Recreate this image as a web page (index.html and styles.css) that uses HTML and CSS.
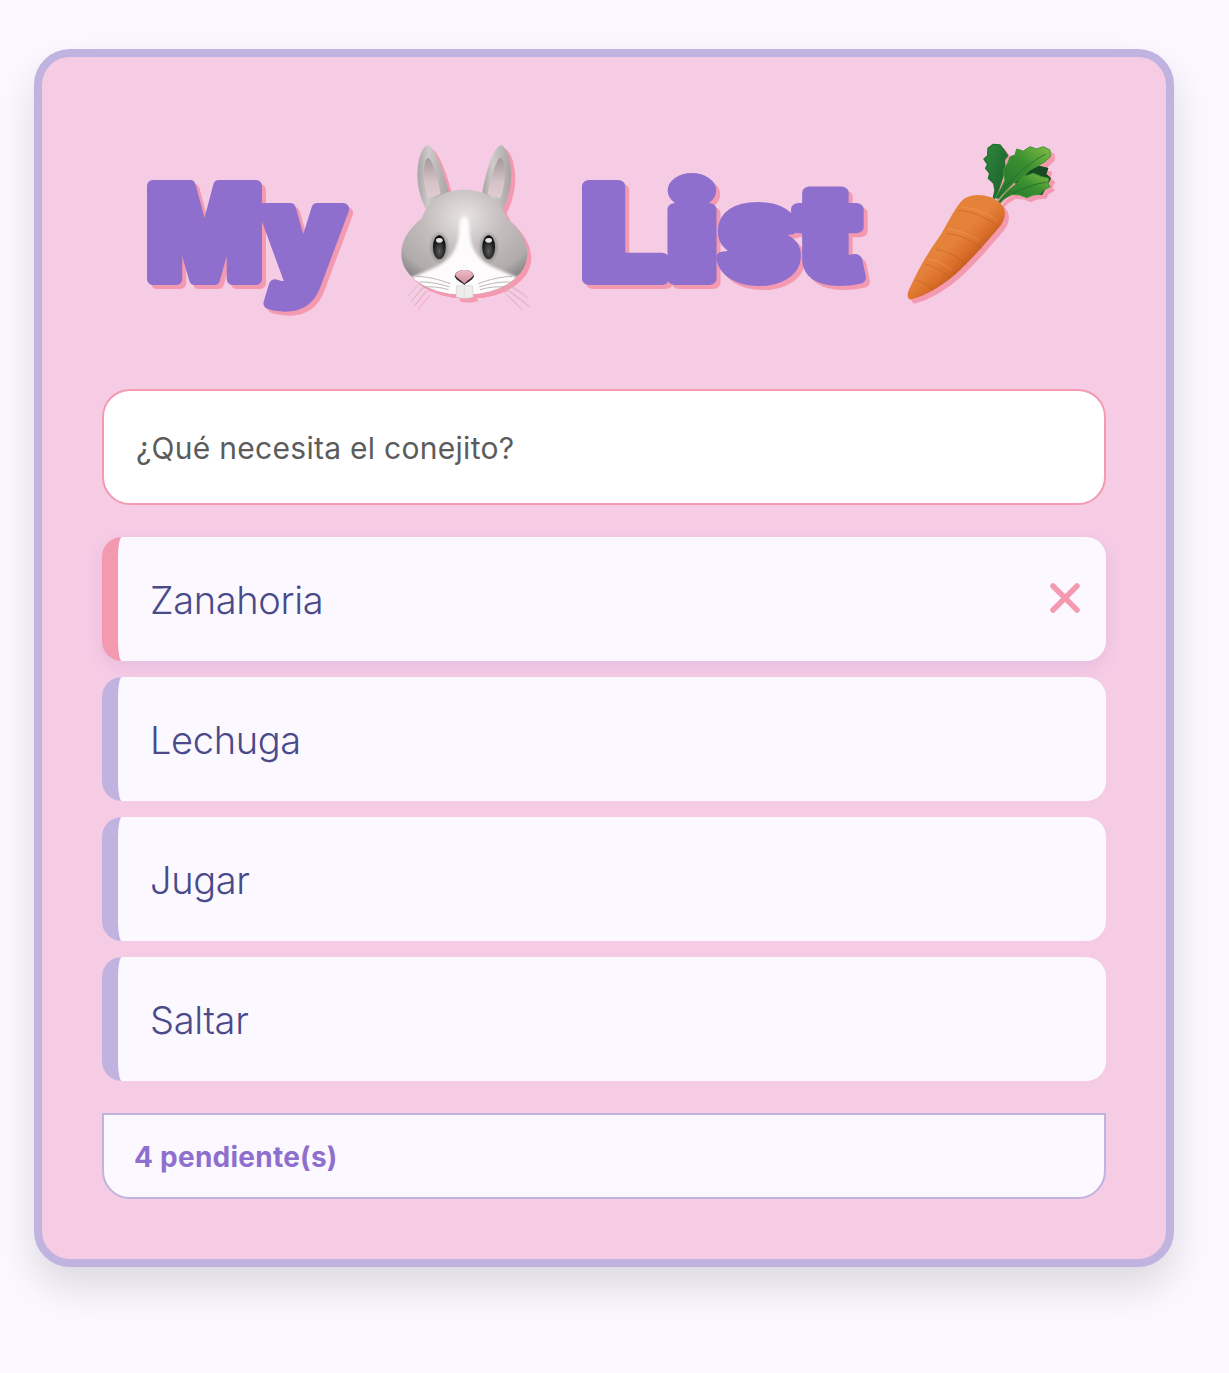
FILE: index.html
```html
<!DOCTYPE html>
<html lang="es">
<head>
<meta charset="utf-8">
<title>My List</title>
<link rel="stylesheet" href="styles.css">
</head>
<body>
<main class="card">
  <h1 class="title">
    <svg class="word word-my" viewBox="0 0 203 180" width="203" height="180"><text x="0" y="144" textLength="115" lengthAdjust="spacingAndGlyphs">M</text><text x="116" y="144" textLength="81" lengthAdjust="spacingAndGlyphs">y</text></svg>
    <svg class="bunny" viewBox="0 0 480 540" width="160" height="180" aria-label="conejo">
      <defs>
        <radialGradient id="headG" cx="50%" cy="26%" r="68%">
          <stop offset="0" stop-color="#e8e4e3"/><stop offset=".45" stop-color="#c4bfbe"/><stop offset=".85" stop-color="#b1acab"/><stop offset="1" stop-color="#8f8b8b"/>
        </radialGradient>
        <linearGradient id="earG" x1="0" y1="0" x2="1" y2="0">
          <stop offset="0" stop-color="#a8a4a4"/><stop offset=".35" stop-color="#cfcbca"/><stop offset="1" stop-color="#a6a2a2"/>
        </linearGradient>
        <linearGradient id="innerEar" x1="0" y1="0" x2="0" y2="1">
          <stop offset="0" stop-color="#a4999a"/><stop offset=".6" stop-color="#d6c3c7"/><stop offset="1" stop-color="#e0cdd0"/>
        </linearGradient>
        <radialGradient id="eyeShade" cx="50%" cy="50%" r="50%">
          <stop offset=".5" stop-color="#6e6a6a" stop-opacity=".75"/><stop offset="1" stop-color="#8a8686" stop-opacity="0"/>
        </radialGradient>
        <linearGradient id="noseG" x1="0" y1="0" x2="0" y2="1">
          <stop offset="0" stop-color="#efbcc8"/><stop offset="1" stop-color="#cf8fa2"/>
        </linearGradient>
        <radialGradient id="eyeG" cx="50%" cy="65%" r="55%">
          <stop offset="0" stop-color="#5e5e5e"/><stop offset="1" stop-color="#0d0d0d"/>
        </radialGradient>
        <filter id="soft" x="-10%" y="-10%" width="120%" height="120%"><feGaussianBlur stdDeviation="4"/></filter>
        <clipPath id="headClip"><path d="M238 164C180 164 132 190 110 250C70 282 48 320 49 358C50 405 86 444 150 466C180 476 205 479 238 479C271 479 296 476 326 466C390 444 426 405 427 358C426 320 406 282 366 250C344 190 296 164 238 164Z"/></clipPath>
      </defs>
      <path d="M125 226C104 190 94 140 98 100C101 62 116 32 128 30C146 36 168 84 192 172Z" fill="url(#earG)"/>
      <path d="M130 190C116 150 112 110 121 80C126 66 132 66 138 78C152 105 162 140 166 178Z" fill="url(#innerEar)"/>
      <path d="M351 226C372 190 382 140 378 100C375 62 360 32 348 30C330 36 308 84 292 172Z" fill="url(#earG)"/>
      <path d="M346 190C360 150 364 110 355 80C350 66 344 66 338 78C324 105 314 140 308 178Z" fill="url(#innerEar)"/>
      <path d="M238 164C180 164 132 190 110 250C70 282 48 320 49 358C50 405 86 444 150 466C180 476 205 479 238 479C271 479 296 476 326 466C390 444 426 405 427 358C426 320 406 282 366 250C344 190 296 164 238 164Z" fill="url(#headG)"/>
      <g clip-path="url(#headClip)">
        <path d="M238 245C226 245 223 262 222 290C220 330 205 368 160 392C125 408 100 418 70 432C100 460 130 480 238 500C346 480 376 460 406 432C376 418 351 408 316 392C271 368 256 330 254 290C253 262 250 245 238 245Z" fill="#fdfbfb" filter="url(#soft)"/>
      </g>
      <ellipse cx="163" cy="337" rx="32" ry="50" fill="url(#eyeShade)"/>
      <ellipse cx="311" cy="337" rx="32" ry="50" fill="url(#eyeShade)"/>
      <ellipse cx="163" cy="337" rx="19" ry="36" fill="url(#eyeG)"/>
      <ellipse cx="311" cy="337" rx="19" ry="36" fill="url(#eyeG)"/>
      <ellipse cx="163" cy="316" rx="10" ry="7" fill="#e4e4e4"/>
      <ellipse cx="311" cy="316" rx="10" ry="7" fill="#e4e4e4"/>
      <path d="M215 452H262L265 486C250 491 228 491 213 486Z" fill="#efedec" stroke="#c9c6c5" stroke-width="1.5"/>
      <path d="M238 456V488" stroke="#cfcccb" stroke-width="1.5"/>
      <path d="M238 450C230 442 214 438 209 424C210 412 222 405 238 405C254 405 266 412 267 424C262 438 246 442 238 450Z" fill="#2a2325"/>
      <path d="M238 446C228 436 216 430 210 420C214 410 226 405 238 405C250 405 262 410 266 420C260 430 248 436 238 446Z" fill="url(#noseG)"/>
      <g fill="none" stroke="#aaa6a6" stroke-width="2.4" stroke-linecap="round">
        <path d="M195 446C160 432 125 425 96 424"/>
        <path d="M192 455C160 445 130 440 104 441"/>
        <path d="M190 464C165 456 140 454 118 456"/>
        <path d="M281 446C316 432 351 425 380 424"/>
        <path d="M284 455C316 445 346 440 372 441"/>
        <path d="M286 464C311 456 336 454 358 456"/>
      </g>
      <g fill="none" stroke="#c6c2c2" stroke-width="2.2" stroke-linecap="round">
        <path d="M104 446L68 484"/><path d="M112 458L78 500"/><path d="M122 468L88 512"/>
        <path d="M370 446L416 476"/><path d="M362 458L422 504"/><path d="M354 468L398 510"/>
      </g>
    </svg>
    <svg class="word word-list" viewBox="0 0 282 180" width="282" height="180"><text x="-1" y="144" textLength="84" lengthAdjust="spacingAndGlyphs">L</text><text x="84" y="144" textLength="50" lengthAdjust="spacingAndGlyphs">i</text><text x="136" y="144" textLength="79" lengthAdjust="spacingAndGlyphs">s</text><text x="214" y="144" textLength="64" lengthAdjust="spacingAndGlyphs">t</text></svg>
    <svg class="carrot" viewBox="0 0 510 525" width="170" height="175" aria-label="zanahoria">
      <defs>
        <linearGradient id="carrotG" x1="0.62" y1="0.72" x2="0.42" y2="0.5">
          <stop offset="0" stop-color="#bb561a"/><stop offset=".5" stop-color="#da6f29"/><stop offset="1" stop-color="#e5823a"/>
        </linearGradient>
        <linearGradient id="leafA" x1="0" y1="1" x2="1" y2="0">
          <stop offset="0" stop-color="#1f6d2a"/><stop offset=".6" stop-color="#3a8f30"/><stop offset="1" stop-color="#82bd45"/>
        </linearGradient>
        <linearGradient id="leafB" x1="0" y1="0" x2="1" y2="1">
          <stop offset="0" stop-color="#2f8a3c"/><stop offset="1" stop-color="#1a5a2a"/>
        </linearGradient>
      </defs>
      <path d="M360 140L400 108L432 94L458 100L452 118L466 130L440 178L380 170Z" fill="#174a22" stroke="#174a22" stroke-width="4" stroke-linejoin="round"/>
      <path d="M295 188L300 165L296 145L280 130L284 115L272 100L278 88L267 72L278 62L279 40L295 28L315 30L330 50L338 62L328 75L330 100L322 130L310 165L300 190Z" fill="url(#leafB)" stroke="#246f32" stroke-width="4" stroke-linejoin="round"/>
      <path d="M302 188L318 160L330 135L324 105L338 85L345 65L360 60L365 42L385 48L405 35L425 42L445 35L465 45L466 65L450 80L430 92L405 105L385 125L355 145L330 170L310 192Z" fill="url(#leafA)" stroke="#3f9431" stroke-width="3" stroke-linejoin="round"/>
      <path d="M310 200L335 170L360 150L385 125L415 115L440 125L462 130L458 145L466 155L445 165L435 178L415 180L395 188L375 180L350 178L325 192L315 205Z" fill="url(#leafA)" stroke="#3f9431" stroke-width="3" stroke-linejoin="round"/>
      <path d="M308 186C340 140 390 90 450 58M316 198C360 170 400 150 452 142" fill="none" stroke="#1f6d2a" stroke-width="2.5" stroke-linecap="round"/>
      <path d="M46 494C36 490 36 478 42 464C62 420 92 362 130 310C158 268 180 214 206 192C236 172 288 178 316 204C334 222 334 246 318 270C290 304 250 352 196 404C154 444 96 482 46 494Z" fill="url(#carrotG)"/>
      <g fill="none" stroke="#b9551b" stroke-width="3" stroke-linecap="round" opacity=".45">
        <path d="M190 226C232 228 280 250 312 276"/>
        <path d="M156 296C196 298 236 320 262 342"/>
        <path d="M124 344C156 346 190 368 214 388"/>
        <path d="M92 388C118 392 146 412 164 428"/>
        <path d="M64 436C82 440 102 452 114 464"/>
      </g>
      <g fill="none" stroke="#f2a566" stroke-width="3" stroke-linecap="round" opacity=".45">
        <path d="M200 216C236 218 276 234 304 254"/>
        <path d="M160 282C196 286 226 300 250 316"/>
        <path d="M100 372C126 376 150 390 170 406"/>
      </g>
    </svg>
  </h1>

  <input class="new-item" type="text" placeholder="¿Qué necesita el conejito?">

  <ul class="list">
    <li class="item item-active">
      <span>Zanahoria</span>
      <svg class="remove" viewBox="0 0 30 30" width="30" height="30" aria-label="eliminar"><path d="M3 3L27 27M27 3L3 27"/></svg>
    </li>
    <li class="item"><span>Lechuga</span></li>
    <li class="item"><span>Jugar</span></li>
    <li class="item"><span>Saltar</span></li>
  </ul>

  <footer class="summary">4 pendiente(s)</footer>
</main>
</body>
</html>
```
FILE: styles.css
```css
* { box-sizing: border-box; }

html, body { margin: 0; }

body {
  min-height: 1373px;
  padding: 49px 55px 0 34px;
  background: #fbf9ff;
  font-family: "Inter", "Liberation Sans", sans-serif;
}

.card {
  height: 1218px;
  padding: 60px;
  background: #f6cbe4;
  border: 8px solid #c0b3e0;
  border-radius: 36px;
  box-shadow: 0 20px 40px rgba(0, 0, 0, 0.13);
}

.title {
  display: flex;
  align-items: flex-start;
  height: 272px;
  margin: 0;
  padding: 18px 0 0 45px;
  font-weight: 900;
}

.word {
  flex: none;
  overflow: visible;
}

.word text {
  fill: #8e6fce;
  stroke: #8e6fce;
  stroke-width: 12px;
  stroke-linejoin: round;
  font-family: "Inter", sans-serif;
  font-size: 128px;
  font-weight: 900;
  filter: drop-shadow(4px 4px 0 #f49ab0);
}

.bunny,
.carrot {
  flex: none;
  filter: drop-shadow(4px 4px 0 #f49ab0);
}

.bunny { margin-left: 35px; }

.word-list { margin-left: 38px; }

.carrot { margin-left: 30px; }

.new-item {
  display: block;
  width: 100%;
  height: 116px;
  padding: 1px 32px 0;
  background: #ffffff;
  border: 2px solid #f49ab0;
  border-radius: 28px;
  font-family: inherit;
  font-size: 30px;
  letter-spacing: 0.28px;
  outline: none;
}

.new-item::placeholder { color: #5c5c5c; opacity: 1; }

.list {
  display: flex;
  flex-direction: column;
  gap: 16px;
  margin: 32px 0;
  padding: 0;
  list-style: none;
}

.item {
  display: flex;
  align-items: center;
  justify-content: space-between;
  height: 124px;
  padding: 1px 26px 0 32px;
  background: #fbf9ff;
  border-left: 16px solid #c0b3e0;
  border-radius: 20px;
  color: #4a4a8a;
  font-size: 38px;
  font-weight: 300;
  letter-spacing: -0.35px;
}

.item-active {
  border-left-color: #f49ab0;
  box-shadow: 0 6px 16px rgba(142, 111, 206, 0.14);
}

.remove {
  margin-top: -3px;
  fill: none;
  stroke: #f49ab0;
  stroke-width: 5.5;
  stroke-linecap: round;
}

.summary {
  display: flex;
  align-items: center;
  height: 86px;
  padding: 1px 30px 0;
  background: #fbf9ff;
  border: 2px solid #c0b3e0;
  border-radius: 0 0 28px 28px;
  color: #8e6fce;
  font-size: 28px;
  font-weight: 700;
  letter-spacing: 0.25px;
}
```
